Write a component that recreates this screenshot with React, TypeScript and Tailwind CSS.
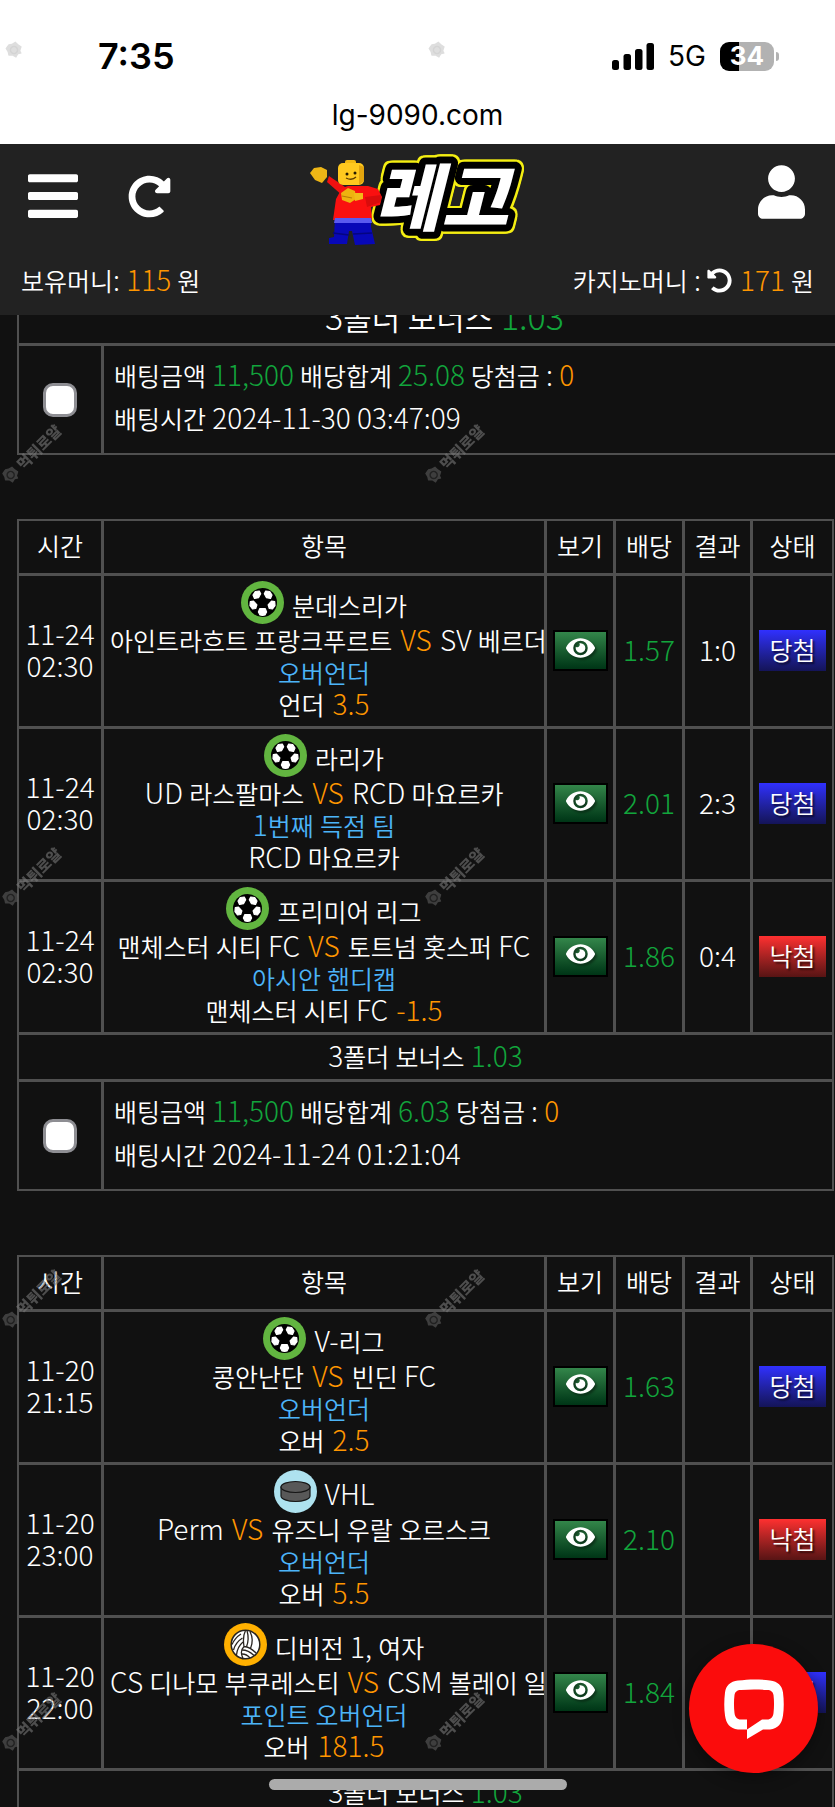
import React from "react";
import { FaBars, FaEye, FaRedoAlt, FaUndoAlt, FaUser } from "react-icons/fa";

type Sport = "soccer" | "hockey" | "volleyball";

interface Pick {
  date: string;
  time: string;
  sport: Sport;
  league: string;
  home: string;
  away: string;
  market: string;
  choice: string;
  line?: string;
  odds: string;
  score: string;
  won: boolean;
}

interface Slip {
  id: string;
  picks: Pick[];
  bonus: string;
  large?: boolean;
  stake: string;
  totalOdds: string;
  payout: string;
  placedAt: string;
}

const slips: Slip[] = [
  {
    id: "a",
    picks: [],
    bonus: "1.03",
    large: true,
    stake: "11,500",
    totalOdds: "25.08",
    payout: "0",
    placedAt: "2024-11-30 03:47:09",
  },
  {
    id: "b",
    picks: [
      { date: "11-24", time: "02:30", sport: "soccer", league: "분데스리가", home: "아인트라흐트 프랑크푸르트", away: "SV 베르더 브레멘", market: "오버언더", choice: "언더", line: "3.5", odds: "1.57", score: "1:0", won: true },
      { date: "11-24", time: "02:30", sport: "soccer", league: "라리가", home: "UD 라스팔마스", away: "RCD 마요르카", market: "1번째 득점 팀", choice: "RCD 마요르카", odds: "2.01", score: "2:3", won: true },
      { date: "11-24", time: "02:30", sport: "soccer", league: "프리미어 리그", home: "맨체스터 시티 FC", away: "토트넘 홋스퍼 FC", market: "아시안 핸디캡", choice: "맨체스터 시티 FC", line: "-1.5", odds: "1.86", score: "0:4", won: false },
    ],
    bonus: "1.03",
    stake: "11,500",
    totalOdds: "6.03",
    payout: "0",
    placedAt: "2024-11-24 01:21:04",
  },
  {
    id: "c",
    picks: [
      { date: "11-20", time: "21:15", sport: "soccer", league: "V-리그", home: "콩안난단", away: "빈딘 FC", market: "오버언더", choice: "오버", line: "2.5", odds: "1.63", score: "", won: true },
      { date: "11-20", time: "23:00", sport: "hockey", league: "VHL", home: "Perm", away: "유즈니 우랄 오르스크", market: "오버언더", choice: "오버", line: "5.5", odds: "2.10", score: "", won: false },
      { date: "11-20", time: "22:00", sport: "volleyball", league: "디비전 1, 여자", home: "CS 디나모 부쿠레스티", away: "CSM 볼레이 일포브", market: "포인트 오버언더", choice: "오버", line: "181.5", odds: "1.84", score: "", won: true },
    ],
    bonus: "1.03",
    stake: "11,500",
    totalOdds: "5.64",
    payout: "0",
    placedAt: "2024-11-20 20:48:12",
  },
];

/* Latin letters and digits are set a little larger and lighter than the Hangul beside them. */
function Mixed({ text, large }: { text: string; large?: boolean }) {
  return text.split(/([\x20-\x7e]+)/).map((run, i) =>
    i % 2 ? (
      <span
        key={i}
        className={large ? "text-[34px] leading-none font-light whitespace-pre" : "text-[28px] leading-none font-light whitespace-pre"}
      >
        {run}
      </span>
    ) : (
      run
    ),
  );
}

function SportIcon({ sport }: { sport: Sport }) {
  if (sport === "hockey") {
    return (
      <svg viewBox="0 0 43 43" className="h-[43px] w-[43px] shrink-0" aria-hidden="true">
        <circle cx="21.5" cy="21.5" r="21.5" fill="#aee2ef" />
        <path d="M7 17v9c0 3 6.500 5.500 14.500 5.500S36 29 36 26v-9z" fill="#585858" stroke="#161616" strokeWidth="1.200" />
        <ellipse cx="21.500" cy="17" rx="14.500" ry="5.500" fill="#585858" stroke="#161616" strokeWidth="1.200" />
      </svg>
    );
  }
  if (sport === "volleyball") {
    return (
      <svg viewBox="0 0 43 43" className="h-[43px] w-[43px] shrink-0" aria-hidden="true">
        <circle cx="21.500" cy="21.500" r="21.500" fill="#ffb000" />
        <circle cx="21.500" cy="21.500" r="14.300" fill="#fff" stroke="#2a2520" strokeWidth="1.500" />
        <g fill="none" stroke="#2a2520" strokeWidth="1.300">
          <path d="M20 23.500c-1-6-1-11 1.500-16M20 23.500c5 .5 9 3.500 12 6.500M20 23.500c-3 3-3.500 7-1 12" />
          <path d="M22.500 23.800c2-5 2-11 .5-16.300M26.500 25.500c2.500-6 2-12-.5-17" />
          <path d="M18.500 15c-4 2.500-7.500 6.500-9 12M17 11c-4 2.500-7 6-9 10.500M19 19c-3.500 3-6 7-6.500 13" />
          <path d="M18 27c5 0 9 2.500 12 5.500M18 31c3.500 0 6 1.500 8 4" />
        </g>
      </svg>
    );
  }
  return (
    <svg viewBox="0 0 43 43" className="h-[43px] w-[43px] shrink-0" aria-hidden="true">
      <circle cx="21.500" cy="21.500" r="21.500" fill="#62b540" />
      <circle cx="21.500" cy="21.500" r="14.500" fill="#000" />
      <g fill="#fff" stroke="#fff" strokeWidth="1.200" strokeLinejoin="round">
        <path d="M18.300 10l1.400 2.800-2.200 3.900-4 .8-1.500-3.500 2.300-3.500z" />
        <path d="M24.700 10l-1.400 2.800 2.200 3.900 4 .8 1.500-3.500-2.300-3.500z" />
        <path d="M9.300 20.500l3.200-.3 3.400 3.600-1.200 3.700-3.200.5-2.500-3.400z" />
        <path d="M33.700 20.500l-3.200-.3-3.400 3.600 1.200 3.700 3.200.5 2.500-3.400z" />
        <path d="M18.700 27.700h5.600l1.300 3.300-1.600 3-2.500.4-2.500-.4-1.600-3z" />
      </g>
    </svg>
  );
}

function Logo() {
  return (
    <svg viewBox="0 0 216 90" className="h-[90px] w-[216px] overflow-visible" role="img" aria-label="레고">
      <g className="[filter:drop-shadow(2px_0_0_#f4ee12)_drop-shadow(-2px_0_0_#f4ee12)_drop-shadow(0_2px_0_#f4ee12)_drop-shadow(0_-2px_0_#f4ee12)]">
        <text
          x="65"
          y="74"
          fontFamily="'Noto Sans CJK KR', sans-serif"
          fontSize="73"
          fontWeight="900"
          fontStyle="italic"
          strokeLinejoin="round"
          fill="#fff"
          stroke="#000"
          strokeWidth="14"
          paintOrder="stroke"
        >
          레고
        </text>
      </g>
      <path d="M20 25l16 11h8v11l-10-2-16-14z" fill="#f01010" />
      <path d="M1 22l4-5 7-1 6 3v7l-5 6-7-3z" fill="#eeb616" />
      <path d="M33 37l6-2h20l10 3 4 8-2 8-9 2 1 13H24l3-21z" fill="#fa1010" />
      <path d="M56 46l16-2v7l-14 5z" fill="#d80c0c" />
      <path d="M26 67h36v9l4 17-20 1-3-14h-3l-2 13H20v-6l5-1z" fill="#0808b8" />
      <path d="M26 67h36l1 5H25z" fill="#5a5af0" />
      <path d="M24 82l16 2M44 83l19-1" stroke="#050580" strokeWidth="1.500" />
      <rect x="36" y="9" width="11" height="6" rx="2" fill="#f3b912" />
      <rect x="29" y="12" width="26" height="22" rx="5" fill="#ffc91f" />
      <path d="M50 14l5 2v14l-5 4z" fill="#e3a50e" />
      <circle cx="38" cy="23" r="1.500" fill="#241a02" />
      <circle cx="46" cy="22" r="1.500" fill="#241a02" />
      <path d="M37 27q6 3 10-1" fill="none" stroke="#5d3c02" strokeWidth="1.300" />
      <path d="M32 42l7-5 7 3 1 8-6 4-8-3z" fill="#eeb20f" />
      <path d="M33 45l10 2" stroke="#b97b05" strokeWidth="1.200" />
      <path d="M45 42h9v6l-8 2z" fill="#f2ba18" />
    </svg>
  );
}

function Watermark({ light }: { light?: boolean }) {
  return (
    <div className={light ? "flex -rotate-45 items-center gap-1 opacity-20" : "flex -rotate-45 items-center gap-1 opacity-60"}>
      <svg viewBox="0 0 16 16" className="h-4 w-4" aria-hidden="true">
        <path d="M8 0l3 2 4 1v4l1 4-4 2-1 3-3-2-4 1-1-4-3-3 2-3 1-4z" fill="#5d5d5d" />
        <circle cx="8" cy="8" r="3.500" fill="none" stroke="#2c2c2c" strokeWidth="1.500" />
      </svg>
      {!light && <span className="text-[15px] leading-4 font-black whitespace-nowrap text-[#777]">먹튀로얄</span>}
    </div>
  );
}

const rule = "border-[#505050]";
const cell = `${rule} border-r-[3px] border-b-[3px] p-0 last:border-r-0`;

function PickRow({ pick }: { pick: Pick }) {
  return (
    <tr>
      <td className={`${cell} pb-1 text-center text-[28px] leading-8 font-light`}>
        {pick.date}
        <br />
        {pick.time}
      </td>
      <td className={`${cell} overflow-hidden`}>
        <div className="flex flex-col px-[6px] pt-[5px] pb-[6px] text-center leading-8 whitespace-nowrap">
          <div className="flex h-[43px] items-end justify-center gap-2">
            <SportIcon sport={pick.sport} />
            <span className="leading-[38px]">
              <Mixed text={pick.league} />
            </span>
          </div>
          <div className="h-8">
            <Mixed text={`${pick.home} `} />
            <span className="mx-[2px] text-[#ff9600]">
              <Mixed text="VS" />
            </span>
            <Mixed text={` ${pick.away}`} />
          </div>
          <div className="h-8 text-[#4cb4f8]">
            <Mixed text={pick.market} />
          </div>
          <div className="h-8">
            <Mixed text={pick.choice} />
            {pick.line && (
              <span className="ml-2 text-[#ff9600]">
                <Mixed text={pick.line} />
              </span>
            )}
          </div>
        </div>
      </td>
      <td className={`${cell} pb-[2px]`}>
        <button
          type="button"
          aria-label="보기"
          className="mx-auto flex h-[41px] w-[55px] items-center justify-center border-2 border-black bg-linear-to-b from-[#33864a] to-[#003516] pb-1 text-white"
        >
          <FaEye className="h-[26px] w-[29px] drop-shadow-[2px_2px_1px_rgba(0,0,0,0.4)]" />
        </button>
      </td>
      <td className={`${cell} pb-[5px] text-center text-[28px] leading-8 font-light text-[#12a53c]`}>{pick.odds}</td>
      <td className={`${cell} pb-[5px] text-center text-[28px] leading-8 font-light`}>{pick.score}</td>
      <td className={`${cell} pb-[2px]`}>
        <div
          className={
            pick.won
              ? "mx-auto h-[41px] w-[67px] bg-linear-to-b from-[#3030ff] to-[#141458] text-center leading-[38px] text-shadow-[2px_2px_2px_rgba(0,0,0,0.6)]"
              : "mx-auto h-[41px] w-[67px] bg-linear-to-b from-[#ff3030] to-[#581414] text-center leading-[38px] text-shadow-[2px_2px_2px_rgba(0,0,0,0.6)]"
          }
        >
          {pick.won ? "당첨" : "낙첨"}
        </div>
      </td>
    </tr>
  );
}

function SlipTable({ slip }: { slip: Slip }) {
  return (
    <table
      className={`table-fixed border-separate border-spacing-0 border-2 ${rule} ${slip.large ? "w-[calc(100%+38px)]" : "w-full"}`}
    >
      <colgroup>
        <col className="w-[85px]" />
        <col />
        <col className="w-[69px]" />
        <col className="w-[69px]" />
        <col className="w-[68px]" />
        <col className="w-[79px]" />
      </colgroup>
      {slip.picks.length > 0 && (
        <thead>
          <tr className="h-[55px]">
            {["시간", "항목", "보기", "배당", "결과", "상태"].map((title) => (
              <th key={title} scope="col" className={`${cell} pb-[5px] text-center leading-8 font-[350]`}>
                {title}
              </th>
            ))}
          </tr>
        </thead>
      )}
      <tbody>
        {slip.picks.map((pick) => (
          <PickRow key={pick.date + pick.time + pick.league} pick={pick} />
        ))}
        <tr className="h-[47px]">
          <td
            colSpan={6}
            className={`${cell} text-center ${slip.large ? "pb-[8px] text-[31px] leading-[36px]" : "pb-[2px] leading-10"}`}
          >
            <Mixed text="3폴더 보너스 " large={slip.large} />
            <span className="text-[#12a53c]">
              <Mixed text={slip.bonus} large={slip.large} />
            </span>
          </td>
        </tr>
        <tr>
          <td className={`border-r-[3px] p-0 ${rule}`}>
            <input
              type="checkbox"
              aria-label={`배팅 선택 ${slip.placedAt}`}
              className="mx-auto block h-[34px] w-[34px] appearance-none rounded-[10px] border-[3px] border-[#8e8e93] bg-white"
            />
          </td>
          <td colSpan={5} className="px-[10px] pt-2 pb-[13px] leading-[43px]">
            <div className="h-[43px]">
              배팅금액
              <span className="mx-[6px] text-[#12a53c]">
                <Mixed text={slip.stake} />
              </span>
              배당합계
              <span className="mx-[6px] text-[#12a53c]">
                <Mixed text={slip.totalOdds} />
              </span>
              <Mixed text="당첨금 : " />
              <span className="text-[#ff9600]">
                <Mixed text={slip.payout} />
              </span>
            </div>
            <div className="h-[43px]">
              <Mixed text={`배팅시간 ${slip.placedAt}`} />
            </div>
          </td>
        </tr>
      </tbody>
    </table>
  );
}

export default function App() {
  return (
    <div className="relative flex h-screen flex-col overflow-hidden bg-[#111] font-['Noto_Sans_CJK_KR',sans-serif] text-[25px] font-[350] text-white">
      <div className="z-10 shrink-0 bg-white font-['Inter',sans-serif] text-black">
        <div className="flex h-[87px] items-end justify-between pr-[56px] pb-2 pl-[98px]">
          <span className="text-[36px] leading-[46px] font-semibold">7:35</span>
          <div className="flex h-[46px] items-center gap-[14px]">
            <svg viewBox="0 0 42 27" className="h-[27px] w-[42px]" aria-hidden="true">
              <rect x="0" y="17" width="7" height="10" rx="2.500" />
              <rect x="11.500" y="11" width="7.500" height="16" rx="2.500" />
              <rect x="23" y="6" width="7.500" height="21" rx="2.500" />
              <rect x="34.500" y="0" width="7.500" height="27" rx="2.500" />
            </svg>
            <span className="text-[28px] font-normal">5G</span>
            <div className="flex items-center gap-[2px]">
              <div className="flex h-[29px] w-[54px] items-center justify-center rounded-[9px] bg-linear-to-r from-black from-35% to-[#b2b2b2] to-35% text-[26px] leading-none font-bold text-white">
                34
              </div>
              <span className="h-[9px] w-[3px] rounded-r-full bg-[#b2b2b2]" />
            </div>
          </div>
        </div>
        <div className="h-[57px] text-center text-[28px] leading-[56px] font-normal">lg-9090.com</div>
      </div>

      <header className="z-10 flex shrink-0 flex-col bg-[#222]">
        <div className="grid h-[104px] grid-cols-3 items-center pr-[30px] pl-7">
          <div className="flex items-center gap-[50px]">
            <button type="button" aria-label="메뉴">
              <FaBars className="h-[58px] w-[50px]" />
            </button>
            <button type="button" aria-label="새로고침">
              <FaRedoAlt className="h-[43px] w-[43px]" />
            </button>
          </div>
          <a href="#" className="mx-auto">
            <Logo />
          </a>
          <button type="button" aria-label="내 정보" className="ml-auto pb-2">
            <FaUser className="h-[54px] w-[47px]" />
          </button>
        </div>
        <div className="flex h-[67px] items-start justify-between px-[21px] leading-[64px]">
          <div>
            보유머니<Mixed text=": " />
            <span className="mr-[6px] text-[#ff9600]">
              <Mixed text="115" />
            </span>
            원
          </div>
          <div className="flex items-center gap-[6px]">
            <span>
              카지노머니<Mixed text=" :" />
            </span>
            <button type="button" aria-label="카지노머니 새로고침">
              <FaUndoAlt className="h-[25px] w-[25px]" />
            </button>
            <span className="ml-[2px] text-[#ff9600]">
              <Mixed text="171" />
            </span>
            <span>원</span>
          </div>
        </div>
      </header>

      <main className="-mt-[18px] flex min-h-0 flex-1 flex-col gap-16 overflow-hidden pr-px pl-[17px]">
        {slips.map((slip) => (
          <SlipTable key={slip.id} slip={slip} />
        ))}
      </main>

      <div className="pointer-events-none absolute inset-0 z-10 overflow-hidden" aria-hidden="true">
        <div className="absolute top-[42px] left-[6px]"><Watermark light /></div>
        <div className="absolute top-[42px] left-[429px]"><Watermark light /></div>
        {["top-[446px]", "top-[869px]", "top-[1291px]", "top-[1714px]"].map((top) => (
          <React.Fragment key={top}>
            <div className={`absolute -left-[6px] ${top}`}><Watermark /></div>
            <div className={`absolute left-[417px] ${top}`}><Watermark /></div>
          </React.Fragment>
        ))}
      </div>

      <button
        type="button"
        aria-label="채팅 상담"
        className="absolute right-[17px] bottom-[34px] z-20 flex h-[129px] w-[129px] items-center justify-center rounded-full bg-[#fb0c0c] shadow-[0_4px_16px_rgba(0,0,0,0.4)]"
      >
        <svg viewBox="0 0 60 60" className="h-[60px] w-[60px]" aria-hidden="true">
          <path
            fillRule="evenodd"
            fill="#fff"
            d="M14 1.500C26 0 34 0 46 1.500c8 1 12 5 13 12 1 8 1 16 0 23-1 8-5 13-13 14h-7L23 60V50.500h-9c-8-1-12-6-13-14-1-7-1-15 0-23 1-7 5-11 13-12zM17 11c-4 0-6 2-6.500 5-.7 6-.7 12 0 18 .5 4 2.500 6.500 6.500 6.500h6v10l15-10h5c4 0 6-2.500 6.500-6.500.7-6 .7-12 0-18-.5-3-2.500-5-6.500-5-9-.8-17-.8-26 0z"
          />
        </svg>
      </button>
      <div className="absolute bottom-[17px] left-1/2 z-20 h-[11px] w-[298px] -translate-x-1/2 rounded-full bg-[#ababab]" />
    </div>
  );
}
